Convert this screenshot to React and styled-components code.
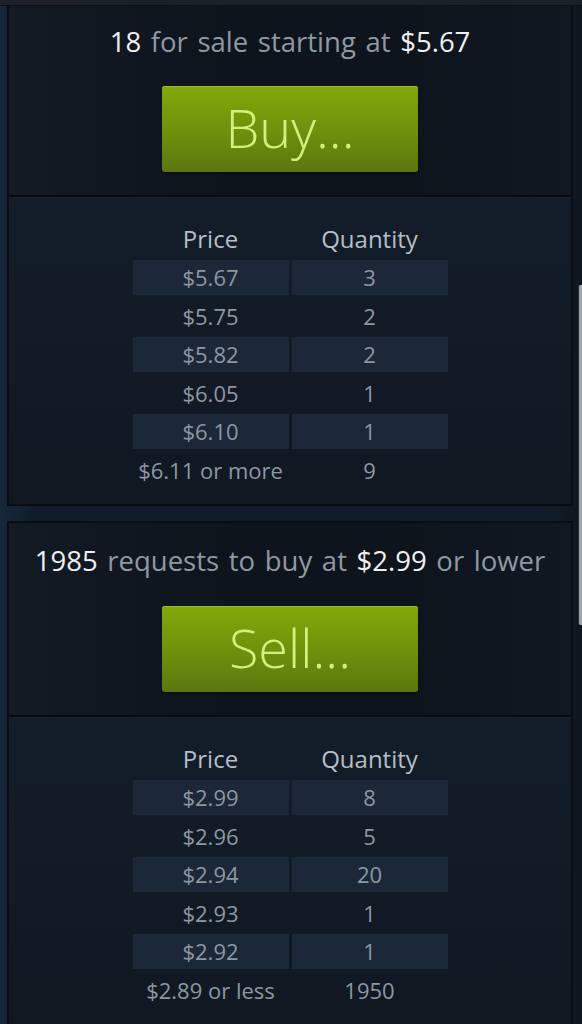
import styled, { createGlobalStyle } from "styled-components";

const GlobalStyle = createGlobalStyle`
  html, body {
    margin: 0;
    padding: 0;
    background: #14202e;
    font-family: "Open Sans", "Noto Sans", sans-serif;
  }
`;

const sellOrders = [
  { price: "$5.67", qty: "3" },
  { price: "$5.75", qty: "2" },
  { price: "$5.82", qty: "2" },
  { price: "$6.05", qty: "1" },
  { price: "$6.10", qty: "1" },
  { price: "$6.11 or more", qty: "9" },
];

const buyOrders = [
  { price: "$2.99", qty: "8" },
  { price: "$2.96", qty: "5" },
  { price: "$2.94", qty: "20" },
  { price: "$2.93", qty: "1" },
  { price: "$2.92", qty: "1" },
  { price: "$2.89 or less", qty: "1950" },
];

const OrderTable = ({ rows }) => (
  <TableArea>
    <Grid>
      <HeadCell>Price</HeadCell>
      <HeadCell>Quantity</HeadCell>
      {rows.map((r, i) => (
        <Row key={i} $shaded={i % 2 === 0 && i < rows.length - 1}>
          <Cell>{r.price}</Cell>
          <Cell>{r.qty}</Cell>
        </Row>
      ))}
    </Grid>
  </TableArea>
);

const App = () => {
  return (
    <>
      <GlobalStyle />
      <TopStrip />
      <Page>
        <Panel>
          <Summary>
            <Headline>
              <b>18</b> for sale starting at <b>$5.67</b>
            </Headline>
            <GreenButton>Buy...</GreenButton>
          </Summary>
          <OrderTable rows={sellOrders} />
        </Panel>
        <Panel $second>
          <Summary $second>
            <Headline>
              <b>1985</b> requests to buy at <b>$2.99</b> or lower
            </Headline>
            <GreenButton $second>Sell...</GreenButton>
          </Summary>
          <OrderTable rows={buyOrders} />
        </Panel>
      </Page>
      <Scrollbar />
    </>
  );
};

const TopStrip = styled.div`
  height: 5px;
  background: #1b2029;
  border-bottom: 1px solid #0c1016;
`;

const Page = styled.main`
  display: flex;
  flex-direction: column;
  gap: 15px;
  padding: 0 9px 0 7px;
  height: 1018px;
  overflow: hidden;
  background: linear-gradient(90deg, #17283b 0%, #121c28 6%, #121c28 94%, #0f1620 100%);
`;

const Panel = styled.section`
  display: flex;
  flex-direction: column;
  border: 2px solid #090d12;
  border-top: ${(p) => (p.$second ? "2px solid #090d12" : "none")};
  background: #0f151d;
  flex-shrink: 0;
`;

const Summary = styled.div`
  display: flex;
  flex-direction: column;
  align-items: center;
  height: ${(p) => (p.$second ? "194px" : "191px")};
  padding-top: ${(p) => (p.$second ? "23px" : "21px")};
  box-sizing: border-box;
  background: linear-gradient(90deg, #121a24 0%, #0e141c 40%, #0e141c 70%, #111822 100%);
  border-bottom: 2px solid #080b10;
`;

const Headline = styled.div`
  font-size: 27.5px;
  line-height: 30px;
  color: #8f99a3;
  word-spacing: 2.5px;
  white-space: nowrap;

  b {
    font-weight: 400;
    color: #eef0f2;
  }
`;

const GreenButton = styled.button`
  margin-top: ${(p) => (p.$second ? "30px" : "29px")};
  width: 256px;
  height: 86px;
  border: none;
  border-radius: 3px;
  background: linear-gradient(180deg, #82a80a 0%, #6e8f0c 55%, #5a7710 100%);
  box-shadow: inset 0 1px 0 #98c21c, 0 1px 2px rgba(0, 0, 0, 0.6);
  color: #d3ef7c;
  font-family: "Open Sans", "Noto Sans", sans-serif;
  font-weight: 300;
  font-size: 54px;
  line-height: 1;
  padding: 0 0 4px;
  cursor: pointer;
`;

const TableArea = styled.div`
  display: flex;
  justify-content: center;
  padding: 23px 0 17px;
  border-top: 1px solid #1a2533;
  background: linear-gradient(180deg, #131d29 0%, #111a25 50%, #101822 100%);
`;

const Grid = styled.div`
  display: grid;
  grid-template-columns: 156px 156px;
  column-gap: 3px;
  row-gap: 3.5px;
`;

const Row = styled.div`
  display: contents;

  & > div {
    background: ${(p) => (p.$shaded ? "#1c2838" : "transparent")};
  }
`;

const HeadCell = styled.div`
  height: 35px;
  display: flex;
  align-items: center;
  justify-content: center;
  font-size: 24px;
  color: #b6bec6;
`;

const Cell = styled.div`
  height: 35px;
  display: flex;
  align-items: center;
  justify-content: center;
  font-size: 22px;
  color: #8c97a2;
  white-space: nowrap;
`;

const Scrollbar = styled.div`
  position: fixed;
  right: 0;
  top: 285px;
  width: 3px;
  height: 340px;
  background: #9ea3a8;
  border-left: 1px solid #2a2f36;
  border-radius: 2px 0 0 2px;
`;

export default App;
